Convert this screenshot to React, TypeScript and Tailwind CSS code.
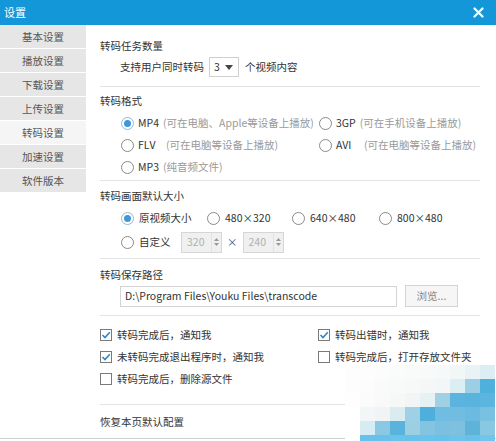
import React from "react";

const font = { fontFamily: '"Noto Sans CJK SC", "Microsoft YaHei", "Liberation Sans", sans-serif' };

const navItems = ["基本设置", "播放设置", "下载设置", "上传设置", "转码设置", "加速设置", "软件版本"];

function Radio({ checked = false }: { checked?: boolean }) {
  return (
    <span
      className={
        "w-[13px] h-[13px] rounded-full border flex items-center justify-center shrink-0 bg-white " +
        (checked ? "border-[#8fb9d8]" : "border-[#8a8a8a]")
      }
    >
      {checked && <span className="w-[7px] h-[7px] rounded-full bg-[#3f97d8]" />}
    </span>
  );
}

function Check({ checked = false }: { checked?: boolean }) {
  return (
    <span className="w-[12px] h-[12px] border border-[#7a7a7a] bg-white flex items-center justify-center shrink-0">
      {checked && (
        <svg width="10" height="10" viewBox="0 0 10 10">
          <path d="M1.5 5 L4 7.5 L8.8 2.2" fill="none" stroke="#2f86c8" strokeWidth="1.6" />
        </svg>
      )}
    </span>
  );
}

function Sep() {
  return <div className="h-px bg-[#e3e3e3] w-full" />;
}

function Spin({ value }: { value: string }) {
  return (
    <span className="w-[41px] h-[21px] border border-[#d6d6d6] bg-[#f0f0f0] flex items-center">
      <span className="flex-1 pl-[5px] text-[#b0b0b0]">{value}</span>
      <span className="w-[10px] h-full flex flex-col items-center justify-center gap-[2px] border-l border-[#e2e2e2]">
        <svg width="5" height="3" viewBox="0 0 5 3"><path d="M0 3 L2.5 0 L5 3Z" fill="#999" /></svg>
        <svg width="5" height="3" viewBox="0 0 5 3"><path d="M0 0 L2.5 3 L5 0Z" fill="#999" /></svg>
      </span>
    </span>
  );
}

const mosaic: string[][] = [
  ["#fdfdfd", "#fcfdfd", "#fcfcfc", "#fafbfb", "#f9fafa", "#f8fafa", "#f6f9f9", "#f1f6f7", "#e9f3f6", "#dcedf3"],
  ["#fdfdfd", "#fcfcfc", "#fafafa", "#f8f9f9", "#f7f8f8", "#f5f7f7", "#f2f6f6", "#dbeef3", "#9ccfe6", "#4fb0dc"],
  ["#fefefe", "#fbfbfb", "#f9f9f9", "#f6f7f7", "#f2f4f5", "#e6f1f4", "#9fd0e4", "#5ab4de", "#58b3dd", "#5cb5de"],
  ["#ffffff", "#f3f6f7", "#f1f4f5", "#d9ecf0", "#9fd1e6", "#4eaedc", "#6fbde0", "#70bde0", "#6bbadf", "#79c1e1"],
  ["#ffffff", "#d6ebf2", "#8ac8e4", "#5ab3dc", "#9ccfe2", "#83c4e0", "#7bc0e0", "#7ec1df", "#5fb2d8", "#88c8e2"],
  ["#ffffff", "#66c2ea", "#66c2ea", "#6ac3ea", "#66c2ea", "#68c3ea", "#66c2ea", "#6cc4ea", "#66c2ea", "#70c6eb"],
];

export default function App() {
  return (
    <div className="w-[496px] h-[441px] bg-white relative overflow-hidden text-[#333]" style={font}>
      {/* title bar */}
      <div className="h-[25px] bg-[#1497d8] flex items-center justify-between pl-[4px] pr-[12px]">
        <span className="text-white text-[11px]">设置</span>
        <svg width="11" height="11" viewBox="0 0 11 11">
          <path d="M1.5 1.5 L9.5 9.5 M9.5 1.5 L1.5 9.5" stroke="#fff" strokeWidth="2.2" strokeLinecap="round" />
        </svg>
      </div>

      <div className="h-[413px] flex">
        {/* side nav */}
        <div className="w-[86px] flex flex-col">
          {navItems.map((n) => (
            <div
              key={n}
              className={
                "h-[24px] flex items-center justify-center text-[10.5px] text-[#555] border-b border-white " +
                (n === "转码设置" ? "bg-[#f5f5f5]" : "bg-[#e6e6e6]")
              }
            >
              {n}
            </div>
          ))}
        </div>

        {/* settings panel */}
        <div className="ml-[14px] w-[380px] flex flex-col text-[10.5px]">
          <div className="h-[20px] mt-[11px] flex items-center">转码任务数量</div>
          <div className="h-[22px] flex items-center pl-[20px]">
            <span>支持用户同时转码</span>
            <span className="ml-[5px] w-[30px] h-[20px] border border-[#cfcfcf] flex items-center pl-[4px] gap-[5px]">
              <span>3</span>
              <svg width="8" height="5" viewBox="0 0 8 5"><path d="M0 0 L8 0 L4 5Z" fill="#444" /></svg>
            </span>
            <span className="ml-[6px]">个视频内容</span>
          </div>
          <div className="mt-[8px]"><Sep /></div>

          <div className="h-[20px] mt-[4px] flex items-center">转码格式</div>
          <div className="mt-[1px] pl-[21px] flex flex-col">
            <div className="h-[22px] flex items-center">
              <div className="w-[198px] flex items-center gap-[4px]">
                <Radio checked />
                <span>MP4</span>
                <span className="text-[#9a9a9a]">(可在电脑、Apple等设备上播放)</span>
              </div>
              <div className="flex items-center gap-[4px]">
                <Radio />
                <span>3GP</span>
                <span className="text-[#9a9a9a]">(可在手机设备上播放)</span>
              </div>
            </div>
            <div className="h-[22px] flex items-center">
              <div className="w-[198px] flex items-center gap-[4px]">
                <Radio />
                <span className="w-[24px]">FLV</span>
                <span className="text-[#9a9a9a]">(可在电脑等设备上播放)</span>
              </div>
              <div className="flex items-center gap-[4px]">
                <Radio />
                <span className="w-[24px]">AVI</span>
                <span className="text-[#9a9a9a]">(可在电脑等设备上播放)</span>
              </div>
            </div>
            <div className="h-[22px] flex items-center gap-[4px]">
              <Radio />
              <span>MP3</span>
              <span className="text-[#9a9a9a]">(纯音频文件)</span>
            </div>
          </div>
          <div className="mt-[2px]"><Sep /></div>

          <div className="h-[20px] mt-[5px] flex items-center">转码画面默认大小</div>
          <div className="pl-[21px] flex flex-col">
            <div className="h-[24px] flex items-center">
              <div className="w-[86px] flex items-center gap-[5px]"><Radio checked /><span>原视频大小</span></div>
              <div className="w-[85px] flex items-center gap-[5px]"><Radio /><span>480×320</span></div>
              <div className="w-[87px] flex items-center gap-[5px]"><Radio /><span>640×480</span></div>
              <div className="flex items-center gap-[5px]"><Radio /><span>800×480</span></div>
            </div>
            <div className="h-[24px] flex items-center">
              <div className="w-[60px] flex items-center gap-[5px]"><Radio /><span>自定义</span></div>
              <Spin value="320" />
              <span className="mx-[5px] text-[#555]">×</span>
              <Spin value="240" />
            </div>
          </div>
          <div className="mt-[4px]"><Sep /></div>

          <div className="h-[20px] mt-[6px] flex items-center">转码保存路径</div>
          <div className="h-[22px] flex items-center pl-[20px]">
            <span className="w-[277px] h-[21px] border border-[#d4d4d4] flex items-center pl-[4px] text-[#333]">
              D:\Program Files\Youku Files\transcode
            </span>
            <span className="ml-[8px] w-[53px] h-[22px] border border-[#d4d4d4] bg-[#f6f6f6] flex items-center justify-center text-[#888]">
              浏览...
            </span>
          </div>
          <div className="mt-[8px]"><Sep /></div>

          <div className="mt-[8px] flex flex-col">
            <div className="h-[22px] flex items-center">
              <div className="w-[218px] flex items-center gap-[5px]"><Check checked /><span>转码完成后，通知我</span></div>
              <div className="flex items-center gap-[5px]"><Check checked /><span>转码出错时，通知我</span></div>
            </div>
            <div className="h-[22px] flex items-center">
              <div className="w-[218px] flex items-center gap-[5px]"><Check checked /><span>未转码完成退出程序时，通知我</span></div>
              <div className="flex items-center gap-[5px]"><Check /><span>转码完成后，打开存放文件夹</span></div>
            </div>
            <div className="h-[22px] flex items-center gap-[5px]"><Check /><span>转码完成后，删除源文件</span></div>
          </div>
          <div className="mt-[14px]"><Sep /></div>

          <div className="h-[20px] mt-[7px] flex items-center">恢复本页默认配置</div>
        </div>
      </div>
      <div className="h-px bg-[#cfcfcf]" />

      {/* mosaic stamp in the corner */}
      <div className="absolute left-[345px] top-[365px] grid grid-cols-10">
        {mosaic.flatMap((row, r) =>
          row.map((c, i) => (
            <div key={r + "-" + i} className="w-[15px] h-[14px]" style={{ backgroundColor: c }} />
          ))
        )}
      </div>
    </div>
  );
}
